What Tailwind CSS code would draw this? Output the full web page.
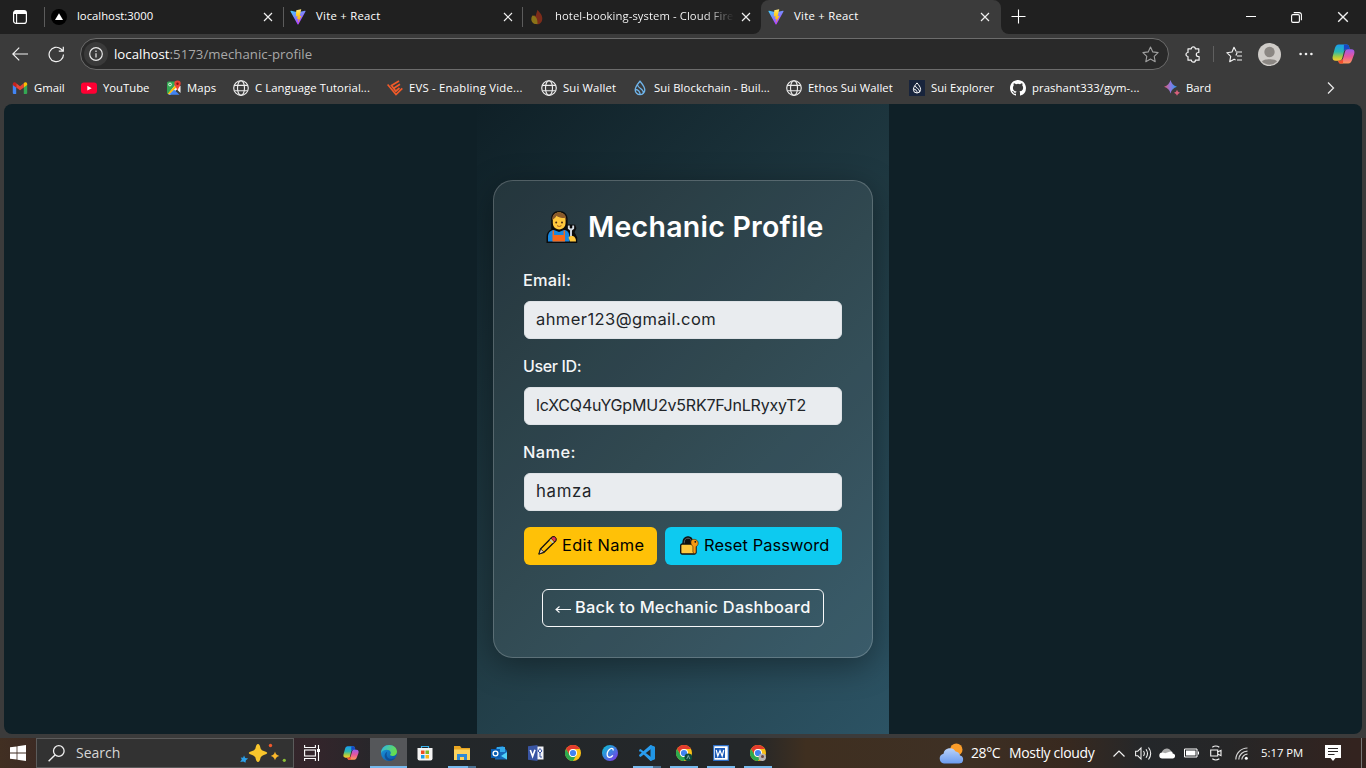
<!DOCTYPE html>
<html lang="en">
<head>
<meta charset="utf-8">
<title>Vite + React</title>
<script src="https://cdn.jsdelivr.net/npm/@tailwindcss/browser@4"></script>
</head>
<body class="w-[1366px] h-[768px] overflow-hidden bg-[#3b3b3b] font-['Open_Sans',sans-serif] text-white flex flex-col">
<svg class="absolute w-0 h-0">
  <defs>
    <linearGradient id="vA" x1="0" y1="0" x2=".6" y2="1"><stop offset="0" stop-color="#41d1ff"/><stop offset="1" stop-color="#bd34fe"/></linearGradient>
    <linearGradient id="vB" x1="0" y1="0" x2="0" y2="1"><stop offset="0" stop-color="#ffea83"/><stop offset=".3" stop-color="#ffd52e"/><stop offset="1" stop-color="#ffa800"/></linearGradient>
    <linearGradient id="cpA" x1="0" y1="0" x2="0" y2="1"><stop offset="0" stop-color="#1a9cf0"/><stop offset=".45" stop-color="#2bb8b0"/><stop offset=".75" stop-color="#a8cc40"/><stop offset="1" stop-color="#ffcb2e"/></linearGradient>
    <linearGradient id="cpB" x1="0" y1="0" x2="0" y2="1"><stop offset="0" stop-color="#9b5cf0"/><stop offset=".5" stop-color="#e8569c"/><stop offset="1" stop-color="#ff9a58"/></linearGradient>
    <linearGradient id="edA" x1="0" y1="0" x2="1" y2=".4"><stop offset="0" stop-color="#2fb4ec"/><stop offset="1" stop-color="#66e04c"/></linearGradient>
    <linearGradient id="edB" x1="0" y1="0" x2="1" y2="1"><stop offset="0" stop-color="#1b9de2"/><stop offset="1" stop-color="#0c4fa0"/></linearGradient>
    <linearGradient id="cvA" x1="0" y1="0" x2="1" y2="1"><stop offset="0" stop-color="#08c5d0"/><stop offset=".5" stop-color="#3d7fe0"/><stop offset="1" stop-color="#8a2be8"/></linearGradient>
    <linearGradient id="bdA" x1="0" y1="0" x2="1" y2="0"><stop offset="0" stop-color="#e2576b"/><stop offset=".5" stop-color="#8b78e0"/><stop offset="1" stop-color="#249cf0"/></linearGradient>
    <linearGradient id="clA" x1="0" y1="0" x2="0" y2="1"><stop offset="0" stop-color="#b9d2fa"/><stop offset="1" stop-color="#6c9cf0"/></linearGradient>
    <symbol id="vite" viewBox="0 0 32 32"><path fill="url(#vA)" d="M31 5 17 30.500q-1 1.200-2 0L1 5q-.5-1.500 1-1.300L16 6.500 30 3.700q1.500-.2 1 1.300z"/><path fill="url(#vB)" d="m22 .5-9.500 2-.8 12.500 3.500-.8-1 6 3-.7-1.300 8L23 13.500l-3.700.8L22.500.5z"/></symbol>
    <symbol id="x" viewBox="0 0 10 10"><path d="m1 1 8 8M9 1 1 9" stroke="#f0f0f0" stroke-width="1.150" fill="none"/></symbol>
    <symbol id="globe" viewBox="0 0 16 16"><g fill="none" stroke="#ececec" stroke-width="1.150"><circle cx="8" cy="8" r="7.300"/><ellipse cx="8" cy="8" rx="3.500" ry="7.300"/><path d="M1.500 5.300h13M1.500 10.700h13"/></g></symbol>
    <symbol id="drop" viewBox="0 0 16 16"><path d="M8 1.200c2.200 2.700 4.800 5.500 4.800 8.700a4.800 4.800 0 0 1-9.600 0C3.200 6.700 5.800 3.900 8 1.200zM5.800 5.100c-.3 3.300 6.200 3.100 5.600 8.200M3.500 9.500c2.500.1 4.800 2 4.600 5.200" fill="none" stroke="currentColor" stroke-width="1.300"/></symbol>
    <symbol id="copilot" viewBox="0 0 24 24"><path fill="url(#cpA)" d="M7 2h8c2 0 2.500 1 3 3l.5 2h-3c-2 0-2.700 1-3.200 3l-1.500 6c-.5 2-1.500 3-3.500 3H4c-3 0-4-2-3.200-5L3 6c.7-2.500 2-4 4-4z"/><path fill="#1747c4" d="M12.500 2H15c2 0 2.500 1 3 3l.5 2h-3c-1.700 0-2.200.5-3.200 2z"/><path fill="url(#cpB)" d="M17 22H9.500c-2 0-2.500-1-3-3h2c2 0 2.800-1 3.300-3l1.700-6c.5-2 1.300-3 3.200-3H20c3 0 4 2 3.200 5L21 18c-.7 2.500-2 4-4 4z"/><path fill="#f4502c" d="M11.500 22h-2c-2 0-2.500-1-3-3h2c1.600 0 2.600-.6 3.100-2z"/></symbol>
    <symbol id="chrome" viewBox="0 0 16 16"><circle cx="8" cy="8" r="8" fill="#fbc116"/><path fill="#e33b2e" d="M1.070 4A8 8 0 0 1 14.930 4H8a4 4 0 0 0-3.460 6z"/><path fill="#2da94f" d="M1.070 4A8 8 0 0 0 8 16l3.460-6A4 4 0 0 1 4.540 10z"/><circle cx="8" cy="8" r="4" fill="#fff"/><circle cx="8" cy="8" r="3.100" fill="#4083f2"/></symbol>
  </defs>
</svg>

<!-- Tab strip -->
<header class="h-[34px] bg-[#3b3b3b] flex shrink-0 text-[11.3px] leading-[34px]">
  <div class="w-[761px] h-full bg-[#202020] rounded-br-[8px] flex items-center">
    <div class="w-[44px] flex pl-[12px]"><svg class="w-4 h-4" viewBox="0 0 16 16"><rect x="1.600" y="1.600" width="12.800" height="12.800" rx="2.500" fill="none" stroke="#fff" stroke-width="1.200"/><path d="M1.600 5V4a2.400 2.400 0 0 1 2.400-2.400h8A2.400 2.400 0 0 1 14.400 4v1z" fill="#fff"/><path d="M4.600 5v9.400" stroke="#fff" stroke-width="1.100"/></svg></div>
    <div class="w-[239px] h-full flex items-center">
      <i class="w-px h-5 bg-[#5c5c5c]"></i>
      <svg class="w-4 h-4 ml-[6px]" viewBox="0 0 16 16"><circle cx="8" cy="8" r="8" fill="#000"/><path d="m8 4.300 4 6.700H4z" fill="#fff"/></svg>
      <span class="w-[186px] ml-[10px] -mt-[2px]">localhost:3000</span><svg class="w-[10px] h-[10px]"><use href="#x"/></svg>
    </div>
    <div class="w-[239px] h-full flex items-center">
      <i class="w-px h-5 bg-[#5c5c5c]"></i>
      <svg class="w-4 h-4 ml-[6px]"><use href="#vite"/></svg>
      <span class="w-[187px] ml-[10px] -mt-[2px] tracking-[0.27px]">Vite + React</span><svg class="w-[10px] h-[10px]"><use href="#x"/></svg>
    </div>
    <div class="w-[239px] h-full flex items-center">
      <i class="w-px h-5 bg-[#5c5c5c]"></i>
      <svg class="w-4 h-4 ml-[6px]" viewBox="0 0 16 16"><path fill="#7c2c1a" d="M8.500.8c1 2 4.800 4.500 4.800 8.600 0 3.600-2.300 5.800-5.300 5.800C4.500 15.200 3 12.600 3.300 9.800L5 6l1.500 1.200z"/><path fill="#8a7318" d="M3.500 6.500c3.500.4 5.300 3.700 5 8.500C4.500 15.500 2.200 12.800 2.300 10c0-1.400.4-2.600 1.200-3.500z"/></svg>
      <span class="w-[179px] mr-[7px] ml-[10px] -mt-[2px] whitespace-nowrap tracking-[0.06px] bg-linear-to-r from-white from-84% to-transparent to-100% bg-clip-text text-transparent">hotel-booking-system - Cloud Fire</span><svg class="w-[10px] h-[10px]"><use href="#x"/></svg>
    </div>
  </div>
  <div class="w-[240px] h-full bg-[#202020]">
    <div class="h-full bg-[#3b3b3b] rounded-t-[8px] flex items-center">
      <svg class="w-4 h-4 ml-[7px]"><use href="#vite"/></svg>
      <span class="w-[186px] ml-[10px] -mt-[2px] tracking-[0.27px]">Vite + React</span><svg class="w-[10px] h-[10px]"><use href="#x"/></svg>
    </div>
  </div>
  <div class="flex-1 h-full bg-[#202020] rounded-bl-[8px] flex items-center">
    <svg class="w-[15px] h-[15px] ml-[10px] -mt-[2px]" viewBox="0 0 15 15"><path d="M7.500.5v14M.5 7.500h14" stroke="#fff" stroke-width="1.100"/></svg>
    <svg class="w-[10px] h-[10px] ml-[220px]" viewBox="0 0 10 10"><path d="M0 4.500h10" stroke="#fff"/></svg>
    <svg class="w-[11px] h-[11px] ml-[35px]" viewBox="0 0 11 11"><g fill="none" stroke="#fff" stroke-width="1.100"><rect x=".6" y="2.600" width="7.800" height="7.800" rx="1.300"/><path d="M2.700.6h5.500a2.200 2.200 0 0 1 2.200 2.200v5.500"/></g></svg>
    <svg class="w-[12px] h-[12px] ml-[35px]"><use href="#x"/></svg>
  </div>
</header>

<!-- Address bar -->
<nav class="h-[40px] shrink-0 flex items-center">
  <svg class="w-4 h-[14px] ml-3" viewBox="0 0 16 14"><path d="M16 7H1M7.200.6.800 7l6.400 6.400" fill="none" stroke="#f2f2f2" stroke-width="1.200"/></svg>
  <svg class="w-[17px] h-[17px] ml-5" viewBox="0 0 17 17"><path d="M15.500 8.500A7.200 7.200 0 1 1 13 3l2 1.900M15.300.7v4.400h-4.500" fill="none" stroke="#f2f2f2" stroke-width="1.200"/></svg>
  <div class="w-[1089px] h-8 ml-[15px] rounded-full border border-[#6c6c6c] bg-[#292929] flex items-center">
    <div class="w-6 h-6 ml-[3px] rounded-full bg-[#3a3a3a] flex items-center justify-center"><svg class="w-[14px] h-[14px]" viewBox="0 0 14 14"><circle cx="7" cy="7" r="6.300" fill="none" stroke="#e8e8e8" stroke-width="1.200"/><path d="M7 6.200v4.200M7 3.600v1.400" stroke="#e8e8e8" stroke-width="1.200"/></svg></div>
    <span class="ml-[6px] text-[13.200px] leading-7 text-[#a8a8a8] tracking-[0.04px]"><b class="font-normal text-white">localhost</b>:5173/mechanic-profile</span>
    <svg class="w-[17px] h-[17px] ml-auto mr-[9px]" viewBox="0 0 17 17"><path d="m8.500 1 2.300 4.900 5.300.7-3.900 3.700 1 5.400-4.700-2.600-4.700 2.600 1-5.400L.9 6.600l5.300-.7z" fill="none" stroke="#a0a0a0" stroke-width="1.100" stroke-linejoin="round"/></svg>
  </div>
  <svg class="w-4 h-[17px] ml-[16px]" viewBox="0 0 16 17"><path d="M3 2.800h3.300a2 2 0 0 1 4 0h3.500v3.700h-.5a2 2 0 0 0 0 4h.8v3.700h-3.700a2 2 0 0 1-4 0H3v-3.700a2 2 0 0 1 0-4z" fill="none" stroke="#f2f2f2" stroke-width="1.200" stroke-linejoin="round"/></svg>
  <i class="w-px h-4 bg-[#606060] ml-[12px]"></i>
  <svg class="w-[17px] h-[17px] ml-[12px]" viewBox="0 0 17 17"><path d="M9.800 6H16M11 10H16M11 14H16" stroke="#f2f2f2" stroke-width="1.200"/><path d="m10 5.300-2-4-2 4.700-5.200.7 3.900 3.600-1 5.400 4.400-2.500 1.500.8M9.900 9.600l1.200-2.800" fill="none" stroke="#f2f2f2" stroke-width="1.150" stroke-linejoin="round"/></svg>
  <svg class="w-[23px] h-[23px] ml-[15px]" viewBox="0 0 23 23"><circle cx="11.500" cy="11.500" r="11.500" fill="#cfccc8"/><circle cx="11.500" cy="9" r="5.200" fill="#8b8783"/><path d="M4 18.500c1.300-3 13.700-3 15 0a10.500 10.500 0 0 1-15 0z" fill="#8b8783"/></svg>
  <svg class="w-[14px] h-[4px] ml-[18px]" viewBox="0 0 14 4"><g fill="#f2f2f2"><circle cx="1.600" cy="2" r="1.300"/><circle cx="7" cy="2" r="1.300"/><circle cx="12.400" cy="2" r="1.300"/></g></svg>
  <svg class="w-[23px] h-[24px] ml-[19px]" viewBox="0 0 24 24"><use href="#copilot"/></svg>
</nav>

<!-- Bookmarks -->
<nav class="h-[30px] shrink-0 pl-3 flex items-center text-[11.3px] leading-[28px] whitespace-nowrap pb-[3px] [&_svg]:w-4 [&_svg]:h-4 [&_svg]:shrink-0 [&>div]:flex [&>div]:items-center [&>div]:gap-[6px] [&>div]:shrink-0">
  <div class="w-[69px]"><svg viewBox="0 0 16 16"><path fill="#4285f4" d="M.8 4.500 4.200 7v7H1.800q-1 0-1-1z"/><path fill="#34a853" d="M11.800 7l3.400-2.500V13q0 1-1 1h-2.400z"/><path fill="#ea4335" d="M4.200 3.300 8 6.200l3.800-2.900V7.500L8 10.300 4.200 7.500z"/><path fill="#c5221f" d="M.8 4.300C.8 2.200 3 1.800 4.200 3v4.500L.8 5z"/><path fill="#fbbc04" d="M15.200 4.300c0-2.100-2.200-2.500-3.400-1.300v4.500L15.200 5z"/></svg><span>Gmail</span></div>
  <div class="w-[85px]"><svg viewBox="0 0 16 16"><rect y="2.500" width="16" height="11.300" rx="3" fill="#ff0033"/><path d="m6.300 5.800 4.400 2.400-4.400 2.400z" fill="#fff"/></svg><span>YouTube</span></div>
  <div class="w-[67px]"><svg viewBox="0 0 16 16"><path fill="#34a853" d="M2.500 1.500h9L2 14q-1 0-1-1.500V3q0-1.500 1.500-1.500z"/><path fill="#f5f5f5" d="m9 5 5.500 1v7L11 9.500 4 15l-2-1z"/><path fill="#4285f4" d="m8 9.500 5.500 5.200H2.800z"/><path fill="#fbbc04" d="m9 5.500 1.500 1.800L3.500 14l-1.800-.3z"/><path fill="#ea4335" d="M11.500.5a3.200 3.200 0 0 1 3.200 3.300c0 2.400-2.300 3.400-2.900 6.200h-.6c-.6-2.800-2.900-3.800-2.900-6.200A3.200 3.200 0 0 1 11.500.5z"/><circle cx="11.500" cy="3.800" r="1.200" fill="#811411"/><circle cx="4" cy="4.500" r="1.400" fill="none" stroke="#fff" stroke-width=".8"/></svg><span class="-ml-px tracking-[0.15px]">Maps</span></div>
  <div class="w-[154px]"><svg><use href="#globe"/></svg><span class="tracking-[0.07px]">C Language Tutorial...</span></div>
  <div class="w-[154px]"><svg viewBox="0 0 16 16"><g fill="none" stroke="#f15a29" stroke-width="1.700"><path d="M.6 4.500 9 14.500 15.300 8.300"/><path d="M12 1 4.500 5.500 8.800 11.200 12.500 8M13 4.200 6.800 8.300"/></g></svg><span class="tracking-[0.23px]">EVS - Enabling Vide...</span></div>
  <div class="w-[91px]"><svg><use href="#globe"/></svg><span class="tracking-[0.15px]">Sui Wallet</span></div>
  <div class="w-[154px]"><svg class="text-[#6fb4ea]"><use href="#drop"/></svg><span class="tracking-[0.08px]">Sui Blockchain - Buil...</span></div>
  <div class="w-[123px]"><svg><use href="#globe"/></svg><span class="tracking-[0.05px]">Ethos Sui Wallet</span></div>
  <div class="w-[101px]"><svg class="bg-[#18243c] p-[2px]"><use href="#drop"/></svg><span>Sui Explorer</span></div>
  <div class="w-[154px]"><svg viewBox="0 0 16 16"><path fill="#fff" d="M8 0C3.580 0 0 3.580 0 8c0 3.540 2.290 6.530 5.470 7.590.4.070.55-.17.55-.38 0-.19-.01-.82-.01-1.490-2.010.37-2.530-.49-2.690-.94-.09-.23-.48-.94-.82-1.130-.28-.15-.68-.52-.01-.53.63-.01 1.080.58 1.230.82.72 1.210 1.870.87 2.330.66.070-.52.28-.87.51-1.070-1.780-.2-3.640-.89-3.640-3.950 0-.87.31-1.590.82-2.150-.08-.2-.36-1.020.08-2.120 0 0 .67-.21 2.200.82a7.600 7.600 0 0 1 4 0c1.530-1.040 2.200-.82 2.200-.82.44 1.100.16 1.920.08 2.120.51.56.82 1.270.82 2.150 0 3.070-1.870 3.750-3.650 3.950.29.25.54.73.54 1.480 0 1.070-.01 1.930-.01 2.200 0 .21.15.46.55.38A8 8 0 0 0 16 8c0-4.420-3.580-8-8-8z"/></svg><span class="tracking-[0.1px]">prashant333/gym-...</span></div>
  <div class="w-[162px]"><svg viewBox="0 0 16 16"><path fill="url(#bdA)" d="M6.500 0q1.200 5 6.500 6.800-5.300 1.600-6.500 6.600Q5.300 8.400 0 6.800 5.300 5 6.500 0z"/><path fill="#d8607c" d="M13 9.800q.5 2.300 3 3-2.500.8-3 3-.5-2.200-3-3 2.500-.7 3-3z"/></svg><span>Bard</span></div>
  <svg viewBox="0 0 16 16"><path d="m2 2.500 5.500 5.500L2 13.500" fill="none" stroke="#e8e8e8" stroke-width="1.300"/></svg>
</nav>

<!-- Page -->
<main class="h-[630px] shrink-0 mx-1 rounded-[8px] overflow-hidden bg-[#0f2027] flex justify-center font-[Inter,sans-serif]">
  <div class="w-[412px] h-full bg-[linear-gradient(135deg,#0f2027,#203a43,#2c5364)] flex items-center justify-center overflow-hidden">
    <section class="w-[380px] h-[478px] rounded-[20px] border border-white/20 bg-white/8 p-[30px] shadow-[0_8px_32px_rgba(0,0,0,0.37)] flex flex-col">
      <h2 class="h-[34px] mb-6 flex items-center text-[28.5px] font-semibold leading-[34px] whitespace-nowrap">
        <svg class="w-8 h-8 ml-[22px] -mt-[2px] shrink-0" viewBox="0 0 32 32"><path fill="#0b0b0b" d="M13 0c5.500 0 8.600 3.500 8.600 8v6l1-.6 6.500.3 1.300 3.500-1.800 4 2.600 5.300v5.500H.5v-6c0-4 2-6.500 4.700-7.500V8c0-4.500 2.800-8 7.800-8z"/><path fill="#ffc83d" d="M6.800 7.500c0-3.600 2.500-6 6.300-6s6.500 2.400 6.500 6v4.300c0 3.800-2.400 6.600-6.400 6.600s-6.400-2.800-6.400-6.600z"/><path fill="#8a5a2b" d="M6.200 9C6 4 8.500 1.400 13.200 1.400c4.800 0 7.300 2.700 7 7.900l-1.700-2.600c-3 .6-5.700-.2-8-1.900C9.700 6.500 8.200 7.600 6.200 9z"/><circle cx="10.200" cy="11.600" r="1" fill="#4a2a12"/><circle cx="16" cy="11.600" r="1" fill="#4a2a12"/><path d="M11 14.700q2.200 1.600 4.400 0" fill="none" stroke="#a85b20"/><path fill="#1887e0" d="M2 30.500V26c0-4.500 3-7 6-7l5 2 5-2c3 0 5.500 2.500 5.500 7v4.500z"/><path fill="#f7691b" d="M6.500 24h12.500v6.500H6.500z"/><path stroke="#f7691b" stroke-width="1.500" d="M7.300 19.500v5M18.300 19.500v5"/><path fill="#ffc83d" d="M22.500 26.500q1.500-2.500 4.500-1.500 3 1 3 5.500h-6z"/><path d="M22.800 14.500v2.700l2.200 1.800 2.200-1.800v-2.700M25 18.500V25" fill="none" stroke="#d2dae2" stroke-width="1.900"/></svg>
        <span class="ml-[10px] -mt-[3px] tracking-[0.24px]">Mechanic Profile</span>
      </h2>
      <label class="h-6 mb-2 leading-[23px] text-[16.4px] font-medium -ml-px text-[#f4f6f7] tracking-[0.2px]">Email:</label>
      <div class="h-[38px] shrink-0 mb-4 rounded-[6px] border border-[#dee2e6] bg-[#e9ecef] px-[11px] leading-[35px] text-[16.5px] text-[#212529] tracking-[0.42px]">ahmer123@gmail.com</div>
      <label class="h-6 mb-2 leading-[23px] text-[16px] font-medium -ml-px text-[#f4f6f7] tracking-[-0.35px]">User ID:</label>
      <div class="h-[38px] shrink-0 mb-4 rounded-[6px] border border-[#dee2e6] bg-[#e9ecef] px-[11px] leading-[35px] text-[16px] text-[#212529] tracking-[-0.19px]">lcXCQ4uYGpMU2v5RK7FJnLRyxyT2</div>
      <label class="h-6 mb-2 leading-[23px] text-[16.4px] font-medium -ml-px text-[#f4f6f7] tracking-[0.4px]">Name:</label>
      <div class="h-[38px] shrink-0 mb-4 rounded-[6px] border border-[#dee2e6] bg-[#e9ecef] px-[11px] leading-[35px] text-[16.8px] text-[#212529] tracking-[0.65px]">hamza</div>
      <div class="flex gap-2 mb-6 h-[38px] shrink-0 text-[16.4px] leading-9 text-black whitespace-nowrap">
        <button class="w-[133px] rounded-[6px] bg-[#ffc107] flex items-center pl-[14px]"><svg class="w-[19px] h-[19px] -mt-px" viewBox="0 0 19 19"><path d="m1 18 1.500-5L14 1.200q1.800-1 3.200.4t.5 3.200L6 16.300z" fill="#ffc107" stroke="#111" stroke-width="1.300" stroke-linejoin="round"/><path d="M13.200 2.300 14.500 1q2-.7 3 .5t.2 3L16.600 5.800z" fill="#e8364f" stroke="#111" stroke-width=".6"/><path d="m12 3.600 3.300 3.300" stroke="#bcd" stroke-width="1.200"/><path d="m2.700 13 3.200 3L1 18z" fill="#f3d3b8" stroke="#111" stroke-width=".8"/></svg><span class="ml-[5px] -mt-[2px] tracking-[0.34px]">Edit Name</span></button>
        <button class="w-[177px] rounded-[6px] bg-[#0dcaf0] flex items-center pl-[15px]"><svg class="w-[19px] h-[19px] -mt-px" viewBox="0 0 19 19"><path d="M3 9V6.500C3 3 5 .8 8 .8s4.500 2.200 4.500 5.700V9" fill="#111" stroke="#111" stroke-width="1.300"/><path d="M4.300 8V6.200c0-2.500 1.500-4 3.700-4s3.300 1.500 3.300 4V8" fill="none" stroke="#5d6368"/><rect x=".7" y="8" width="15.300" height="10" rx="1.500" fill="#ffc83d" stroke="#111" stroke-width="1.300"/><path d="M12 3.800c2.500-1.200 6.200 0 6.200 3.300 0 2-1 3-2.200 3.500V17l-1.500.5-1.600-1.200v-6c-2-1-2.700-4.800-.9-6.500z" fill="#f59a12" stroke="#3c2605" stroke-width=".6"/><circle cx="15.300" cy="5.800" r=".9" fill="#111"/></svg><span class="ml-[5px] -mt-[2px] tracking-[0.1px]">Reset Password</span></button>
      </div>
      <button class="w-[282px] h-[38px] shrink-0 self-center rounded-[6px] border border-[#f8f9fa] text-[#f8f9fa] text-[16.4px] leading-[35px] font-medium flex items-center pl-3 whitespace-nowrap"><svg class="w-[16px] h-[7px] mt-[2px]" viewBox="0 0 16 7"><path d="M16 3.500H1M4.500.5 1 3.500l3.500 3" fill="none" stroke="#f8f9fa" stroke-width="1.100"/></svg><span class="ml-1 -mt-[2px] tracking-[0.24px]">Back to Mechanic Dashboard</span></button>
    </section>
  </div>
</main>

<!-- Taskbar -->
<footer class="h-[30px] mt-1 shrink-0 flex bg-[linear-gradient(90deg,#412f22_0%,#3c2a24_3%,#33252b_23%,#23272a_29%,#242729_55%,#3f2f20_59%,#3e3024_70%,#38291f_78%,#24272a_84%,#262627_90%,#33231f_99%)]">
  <div class="w-9 flex items-center justify-center"><svg class="w-4 h-4" viewBox="0 0 16 16"><path fill="#fff" d="M0 2.300 6.600 1.400v6.200H0zM7.400 1.300 16 0v7.600H7.400zM0 8.400h6.600v6.200L0 13.700zM7.400 8.400H16V16l-8.600-1.200z"/></svg></div>
  <div class="w-[258px] h-[30px] border border-[#5b5b5b] bg-[#323232] flex items-center pl-[11px]">
    <svg class="w-[17px] h-[17px]" viewBox="0 0 17 17"><circle cx="10.800" cy="6" r="5.300" fill="none" stroke="#f0f0f0" stroke-width="1.300"/><path d="M7 9.900.6 16.300" stroke="#f0f0f0" stroke-width="1.400"/></svg>
    <span class="ml-[11px] text-[14px] leading-7 text-[#d6d6d6]">Search</span>
    <svg class="w-[46px] h-[20px] ml-auto mr-[7px]" viewBox="0 0 46 20"><path fill="#f9c62c" d="M18 1q1.700 0 2.600 4.400 1 2 3.200 2.500 3.500.8 3.500 2t-3.500 2q-2.200.6-3.200 2.600Q19.700 19 18 19t-2.600-4.500q-1-2-3.200-2.600-3.500-.8-3.500-2t3.500-2q2.200-.5 3.200-2.500Q16.300 1 18 1z"/><path fill="#fbb72b" d="M35 8.500q.8 3.700 4.300 4.400-3.500.8-4.300 4.300-.8-3.500-4.300-4.300 3.500-.7 4.300-4.400z"/><path fill="#2ba0ea" d="M4 12.500 5.200 15l3 .6-2.300 1.700-.4 2.500-2.300-1.400-3 .5 1.600-2.300-1-2.200 2.300.3z"/><circle cx="30.500" cy="2.500" r="1.700" fill="#f0582c"/><circle cx="44.300" cy="17.300" r="1.600" fill="#8bbf35"/></svg>
  </div>
  <div class="flex h-full -ml-px [&>div]:w-[37px] [&>div]:h-full [&>div]:flex [&>div]:flex-col [&>div]:items-center [&>div]:pt-[7px] [&>div>svg]:w-4 [&>div>svg]:h-4 [&>div>i]:w-[28px] [&>div>i]:h-[2px] [&>div>i]:mt-auto [&>div>i]:shrink-0 [&>div>i]:bg-[#76b9ed]">
    <div><svg viewBox="0 0 16 16"><g fill="none" stroke="#fff" stroke-width="1.100"><path d="M.6 0v2.500h10.800V0M.6 16v-2.500h10.800V16M14.500 0v16"/><rect x=".6" y="5" width="10.800" height="6"/></g><path fill="#fff" d="M13 4h3v3h-3z"/></svg></div>
    <div class="pl-[4px] mr-[3px]"><svg viewBox="0 0 24 24"><use href="#copilot"/></svg></div>
    <div class="bg-[#55575a] -mr-px"><svg viewBox="0 0 16 16"><circle cx="8" cy="8" r="8" fill="url(#edB)"/><path fill="url(#edA)" d="M0 8C.3 3.300 3.800 0 8.200 0 13 0 16 3.300 16 6.700c0 2.600-2 4.200-4.300 4.200-1.800 0-2.900-.7-2.600-1.400.8-1 .8-1.500.5-2.600C8.800 4.300 2.300 3.700 0 8z"/><path fill="#0d478e" d="M5.700 9c-.5 4 3.500 6.300 8.300 4.300-2.700 3.700-9.500 3.300-10.300-1.800-.2-2 .7-4 2.500-4.800z" opacity=".75"/></svg><i class="!w-full"></i></div>
    <div><svg viewBox="0 0 16 16"><path d="M4.500 4V1.500h7V4" fill="none" stroke="#3ab2ec" stroke-width="1.200"/><path d="M.5 3h15v10.500q0 2-2 2h-11q-2 0-2-2z" fill="#f4f4f4"/><path fill="#f04e23" d="M4 5.500h3.500V9H4z"/><path fill="#7db928" d="M8.500 5.500H12V9H8.500z"/><path fill="#1d9fe8" d="M4 10h3.500v3.500H4z"/><path fill="#fbb718" d="M8.500 10H12v3.500H8.500z"/></svg></div>
    <div><svg viewBox="0 0 16 16"><path d="M0 1h6l1.500 2H16v4H0z" fill="#e9a521"/><path d="M0 4.500h16V15H0z" fill="#fcd35e"/><path d="M3 9h10v6h-3v-3H6v3H3z" fill="#2f8ad6"/></svg><i class="border-r-[8px] border-[#4a7191]"></i></div>
    <div><svg viewBox="0 0 16 16"><path fill="#1668b8" d="M5 2.500 12 1l4 5v8.500H4z"/><path fill="#32a9ea" d="M6 2h8v5H6z"/><path fill="#50d0f8" d="m16 7-6 4 6 3.500z"/><path fill="#0a5db0" d="M0 4h9v9H0z"/><circle cx="4.500" cy="8.500" r="2.400" fill="none" stroke="#fff" stroke-width="1.300"/></svg></div>
    <div><svg viewBox="0 0 16 16"><path fill="#f2f4fa" d="M8 1.500h7.500v13H8z"/><path fill="none" stroke="#3955a3" d="M12 3.500 14 6l-2 2-2-2zM12 8v4h2"/><path fill="#3955a3" d="M0 1.200 9.500 0v16L0 14.800z"/><path d="m2.300 5 2.300 6.300L7 4.700" fill="none" stroke="#fff" stroke-width="1.600"/></svg></div>
    <div><svg><use href="#chrome"/></svg></div>
    <div><svg viewBox="0 0 16 16"><circle cx="8" cy="8" r="8" fill="url(#cvA)"/><path d="M11 5.500c.6-1.800-.6-2.500-2-2-2.400.9-4.200 4-3.800 6.500.4 3.200 4 3 5.600.3" fill="none" stroke="#fff" stroke-width="1.300"/></svg></div>
    <div><svg viewBox="0 0 16 16"><path d="M11.500 0 16 2v12l-4.500 2L1.500 6.500l-1 .2L0 5l1.500-1L12 12V4L1.500 12 0 11l.3-1.200z" fill="#2a9df0"/><path d="M11.500 0 16 2v12l-4.500 2z" fill="#2196e6"/></svg><i class="border-r-[8px] border-[#4a7191]"></i></div>
    <div><svg viewBox="0 0 16 16"><use href="#chrome"/><circle cx="12.300" cy="12.300" r="3.800" fill="#0c4a3a"/><path d="m10.800 14 1.500-3.500 1.500 3.500" stroke="#9cc" fill="none" stroke-width=".7"/></svg><i></i></div>
    <div><svg viewBox="0 0 16 16"><path d="M.7.700h14.600v14.600H.7z" fill="#fff" stroke="#2b6cc4" stroke-width="1.200"/><path fill="#1c5bb8" d="M2 3h10v10H2z"/><path d="m3.200 5 1.600 6L7 5.500 9.200 11l1.600-6" fill="none" stroke="#fff" stroke-width="1.200"/></svg><i></i></div>
    <div><svg viewBox="0 0 16 16"><use href="#chrome"/><circle cx="12.300" cy="12.300" r="3.700" fill="#b9b4b4"/><circle cx="12.500" cy="11.500" r="1.500" fill="#6c4a4a"/></svg><i></i></div>
  </div>
  <div class="ml-auto flex items-center h-full">
    <svg class="w-[25px] h-[21px]" viewBox="0 0 25 21"><circle cx="17.300" cy="6.700" r="6.200" fill="#fb9d2a"/><path d="M5 20.500a5 5 0 0 1-.5-9.800A6.500 6.500 0 0 1 16.600 8.600a5 5 0 0 1 4.400 4 4 4 0 0 1-.8 7.900z" fill="url(#clA)"/></svg>
    <span class="ml-[7px] w-[38px] text-[14px] leading-7 tracking-[-0.4px]">28°C</span>
    <span class="w-[104px] text-[14px] leading-7 whitespace-nowrap tracking-[-0.32px]">Mostly cloudy</span>
    <svg class="w-3 h-[7px]" viewBox="0 0 12 7"><path d="m.5 6.500 5.500-5.500 5.500 5.500" fill="none" stroke="#f4f4f4" stroke-width="1.200"/></svg>
    <svg class="w-[17px] h-[15px] ml-[10px]" viewBox="0 0 17 15"><path d="M.6 5.200h2.200L6 2v11L2.800 9.800H.6zM8.500 5q1.700 2.500 0 5M11 3.200q3 4.300 0 8.600M13.500 1.500q4.400 6 0 12" fill="none" stroke="#f4f4f4" stroke-width="1.050"/></svg>
    <svg class="w-4 h-3 ml-[7px]" viewBox="0 0 16 12"><path d="M3 8a4.500 4.500 0 0 1 .8-4.500A4.800 4.800 0 0 1 12 4l-8 5z" fill="#aaa"/><path d="M3.200 11.500a3 3 0 0 1 .2-6c1.200 0 2 .4 2.800.8L11 4.500c1.500-.5 2.500.5 2.700 2a2.500 2.500 0 0 1-.3 5z" fill="#fff"/></svg>
    <svg class="w-[15px] h-[10px] ml-[9px]" viewBox="0 0 15 10"><path d="M.5 1h12.500v8H.5zM14.500 3.500v3" fill="none" stroke="#fff"/><path d="M2 2.500h9.500v5H2z" fill="#fff"/></svg>
    <svg class="w-3 h-4 ml-[11px]" viewBox="0 0 12 16"><path d="M.7 5h7v6h-7zM7.700 7l3.300-1.700v5.400L7.700 9M2.300 2.300q3.500-2.500 7 0M2.300 13.700q3.500 2.500 7 0" fill="none" stroke="#f4f4f4" stroke-width="1.100"/></svg>
    <svg class="w-[13px] h-[13px] ml-[13px]" viewBox="0 0 13 13"><g fill="none" stroke="#d4d4d4" stroke-width="1.200"><path d="M.8 12.500A11.700 11.700 0 0 1 12.500 1"/><path d="M3.800 12.500a8.700 8.700 0 0 1 8.700-8.400"/><path d="M6.800 12.500a5.700 5.700 0 0 1 5.700-5.300"/></g><circle cx="11.300" cy="11.300" r="1.500" fill="#fff"/></svg>
    <span class="ml-[13px] w-[64px] text-[11.300px] leading-7 whitespace-nowrap">5:17 PM</span>
    <svg class="w-4 h-4" viewBox="0 0 16 16"><path fill="#fff" d="M0 0h16v13h-5.500L8 16l-2.500-3H0z"/><path d="M3 3.500h10M3 6.500h10M3 9.500h6.500" stroke="#2a2626" stroke-width="1.100"/></svg>
    <i class="w-px h-full bg-[#777] ml-[20px] mr-[4px]"></i>
  </div>
</footer>
</body>
</html>
